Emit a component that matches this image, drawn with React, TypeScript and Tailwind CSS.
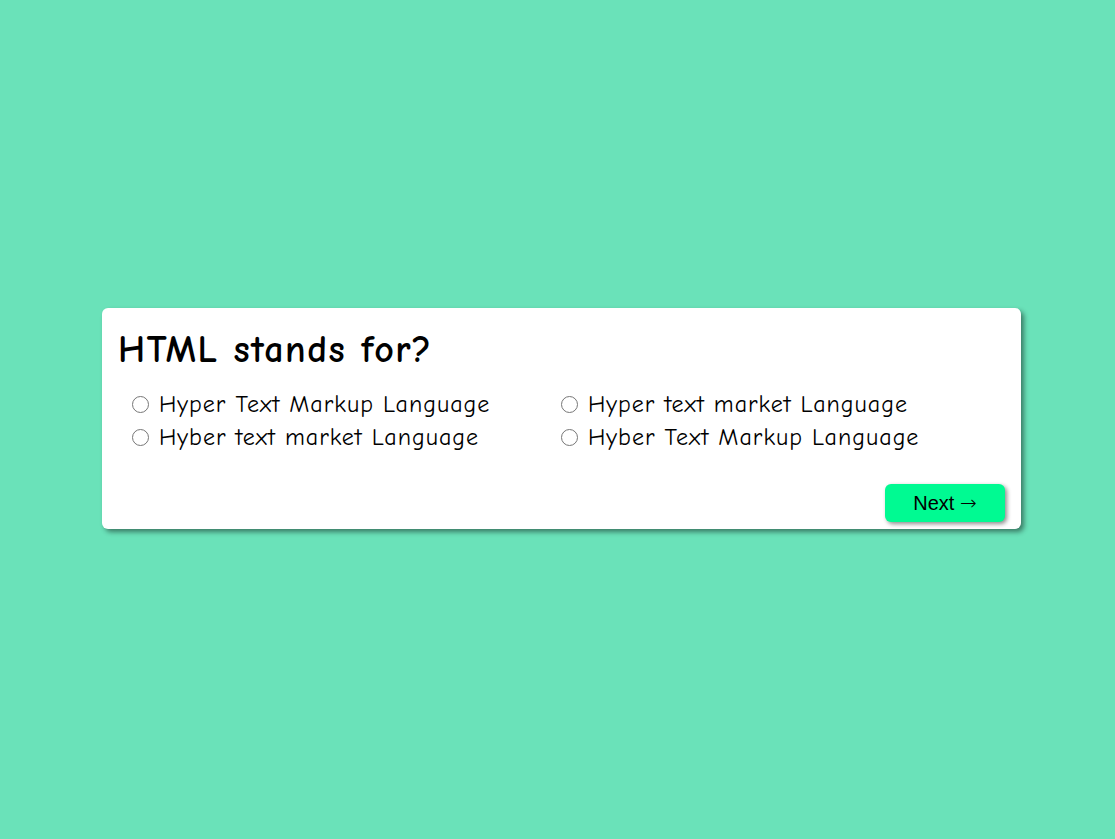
export default function App() {
  const options = [
    "Hyper Text Markup Language",
    "Hyper text market Language",
    "Hyber text market Language",
    "Hyber Text Markup Language",
  ];

  return (
    <main className="min-h-screen flex items-center justify-center bg-[#6ae2b9]">
      <div
        className="ml-[8px] -mt-[2px] w-[919px] bg-white rounded-[6px] shadow-[3px_3px_5px_rgba(0,0,0,0.45)] px-[16px] pt-[20px] pb-[7px]"
        style={{ fontFamily: '"Comic Sans MS", "Comic Neue", cursive' }}
      >
        <h1 className="text-[38px] font-bold leading-[44px] tracking-[1.5px] text-black">HTML stands for?</h1>
        <div className="grid grid-cols-[429px_1fr] pl-[14px] mt-[16px]">
          {options.map((o) => (
            <label key={o} className="flex items-center gap-[10px] text-[24px] leading-[33px] tracking-[1px] text-black">
              <input type="radio" name="q" className="w-[17px] h-[17px] m-0 accent-gray-500" />
              {o}
            </label>
          ))}
        </div>
        <div className="flex justify-end mt-[30px]">
          <button
            className="w-[120px] h-[38px] bg-[#00fa92] rounded-[6px] shadow-[2px_2px_4px_rgba(0,0,0,0.45)] text-[20px] text-black"
            style={{ fontFamily: '"Liberation Sans", Arial, sans-serif' }}
          >
            Next <span className="font-extralight" style={{ fontFamily: '"DejaVu Sans", sans-serif' }}>→</span>
          </button>
        </div>
      </div>
    </main>
  );
}
